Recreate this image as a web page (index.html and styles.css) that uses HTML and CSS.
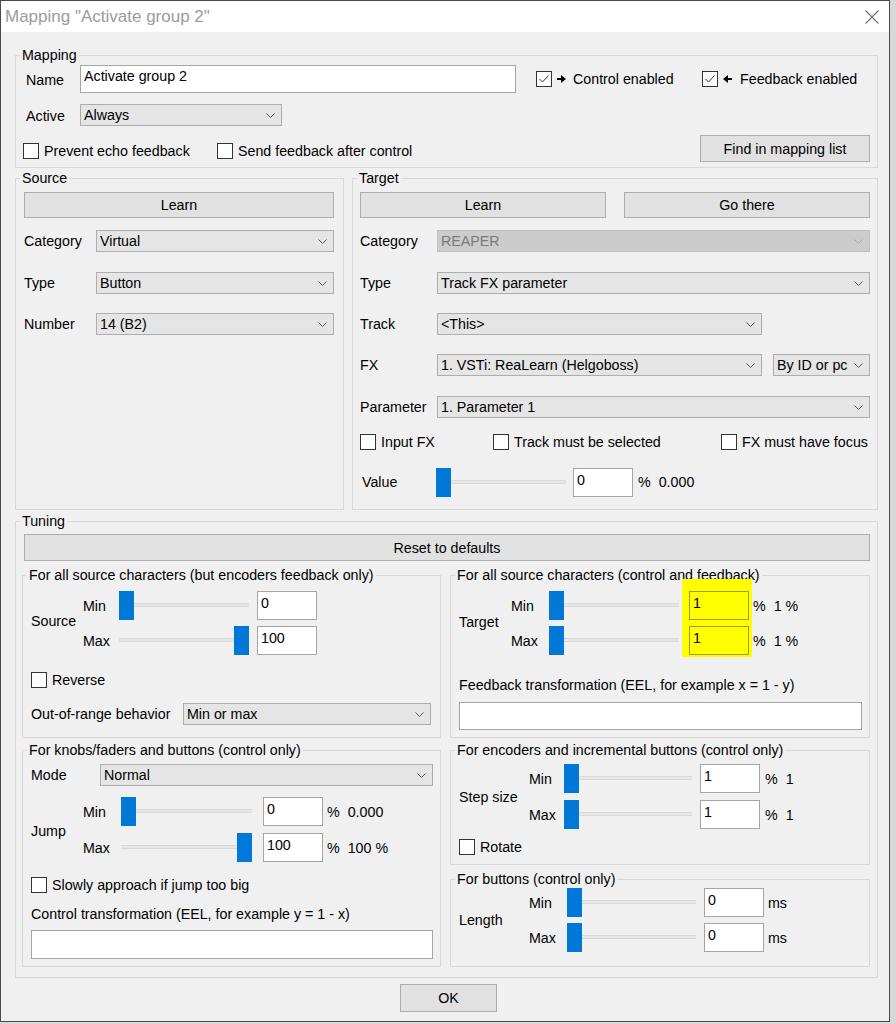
FILE: index.html
```html
<!DOCTYPE html>
<html>
<head>
<meta charset="utf-8">
<title>Mapping</title>
<link rel="stylesheet" href="styles.css">
</head>
<body>
<div class="window">
  <div class="titlebar">
    <span class="title">Mapping "Activate group 2"</span>
    <svg class="close" width="14" height="14" viewBox="0 0 14 14"><path d="M0.5 0.5 L13.5 13.5 M13.5 0.5 L0.5 13.5" stroke="#707070" stroke-width="1.1" fill="none"/></svg>
  </div>
  <div class="content">
    <fieldset class="group mapping">
      <legend>Mapping</legend>
      <div class="mapping-body">
        <div class="row r-name">
          <span class="lbl w-map">Name</span>
          <div class="input name-input">Activate group 2</div>
          <div class="chk ctrl-en">
            <span class="cb"><svg width="12" height="12" viewBox="0 0 12 12"><polyline points="1.5,6 4.5,9 10.5,2.5" fill="none" stroke="#333" stroke-width="1"/></svg></span>
            <svg class="arrow" width="9" height="8" viewBox="0 0 9 8"><rect x="0" y="3" width="5" height="2" fill="#000"/><polygon points="4,0 9,4 4,8" fill="#000"/></svg>
            <span class="arrow-text">Control enabled</span>
          </div>
          <div class="chk">
            <span class="cb"><svg width="12" height="12" viewBox="0 0 12 12"><polyline points="1.5,6 4.5,9 10.5,2.5" fill="none" stroke="#333" stroke-width="1"/></svg></span>
            <svg class="arrow" width="9" height="8" viewBox="0 0 9 8"><rect x="4" y="3" width="5" height="2" fill="#000"/><polygon points="5,0 0,4 5,8" fill="#000"/></svg>
            <span class="arrow-text fb">Feedback enabled</span>
          </div>
        </div>
        <div class="row r-active">
          <span class="lbl w-map">Active</span>
          <div class="select active-select"><span>Always</span><svg class="chev" width="9" height="5" viewBox="0 0 9 5"><polyline points="0.5,0.5 4.5,4.5 8.5,0.5" fill="none" stroke="#555" stroke-width="1"/></svg></div>
        </div>
        <div class="row r-opts">
          <div class="chk prevent opt"><span class="cb"></span><span>Prevent echo feedback</span></div>
          <div class="chk opt"><span class="cb"></span><span>Send feedback after control</span></div>
          <div class="btn find-btn">Find in mapping list</div>
        </div>
      </div>
    </fieldset>

    <div class="st-row">
      <fieldset class="group source">
        <legend>Source</legend>
        <div class="src-body">
          <div class="btn learn">Learn</div>
          <div class="frow m12"><span class="lbl src-lbl">Category</span><div class="select grow"><span>Virtual</span><svg class="chev" width="9" height="5" viewBox="0 0 9 5"><polyline points="0.5,0.5 4.5,4.5 8.5,0.5" fill="none" stroke="#555" stroke-width="1"/></svg></div></div>
          <div class="frow m20"><span class="lbl src-lbl">Type</span><div class="select grow"><span>Button</span><svg class="chev" width="9" height="5" viewBox="0 0 9 5"><polyline points="0.5,0.5 4.5,4.5 8.5,0.5" fill="none" stroke="#555" stroke-width="1"/></svg></div></div>
          <div class="frow m19"><span class="lbl src-lbl">Number</span><div class="select grow"><span>14 (B2)</span><svg class="chev" width="9" height="5" viewBox="0 0 9 5"><polyline points="0.5,0.5 4.5,4.5 8.5,0.5" fill="none" stroke="#555" stroke-width="1"/></svg></div></div>
        </div>
      </fieldset>
      <fieldset class="group target">
        <legend>Target</legend>
        <div class="tgt-body">
          <div class="tgt-btns"><div class="btn tbtn">Learn</div><div class="btn tbtn">Go there</div></div>
          <div class="frow m12"><span class="lbl tgt-lbl">Category</span><div class="select grow disabled"><span>REAPER</span><svg class="chev" width="9" height="5" viewBox="0 0 9 5"><polyline points="0.5,0.5 4.5,4.5 8.5,0.5" fill="none" stroke="#a8a8a8" stroke-width="1"/></svg></div></div>
          <div class="frow m20"><span class="lbl tgt-lbl">Type</span><div class="select grow"><span>Track FX parameter</span><svg class="chev" width="9" height="5" viewBox="0 0 9 5"><polyline points="0.5,0.5 4.5,4.5 8.5,0.5" fill="none" stroke="#555" stroke-width="1"/></svg></div></div>
          <div class="frow m19"><span class="lbl tgt-lbl">Track</span><div class="select sel-track"><span>&lt;This&gt;</span><svg class="chev" width="9" height="5" viewBox="0 0 9 5"><polyline points="0.5,0.5 4.5,4.5 8.5,0.5" fill="none" stroke="#555" stroke-width="1"/></svg></div></div>
          <div class="frow m19"><span class="lbl tgt-lbl">FX</span><div class="select sel-track"><span>1. VSTi: ReaLearn (Helgoboss)</span><svg class="chev" width="9" height="5" viewBox="0 0 9 5"><polyline points="0.5,0.5 4.5,4.5 8.5,0.5" fill="none" stroke="#555" stroke-width="1"/></svg></div><div class="select sel-by"><span>By ID or pc</span><svg class="chev" width="9" height="5" viewBox="0 0 9 5"><polyline points="0.5,0.5 4.5,4.5 8.5,0.5" fill="none" stroke="#555" stroke-width="1"/></svg></div></div>
          <div class="frow m20"><span class="lbl tgt-lbl">Parameter</span><div class="select grow"><span>1. Parameter 1</span><svg class="chev" width="9" height="5" viewBox="0 0 9 5"><polyline points="0.5,0.5 4.5,4.5 8.5,0.5" fill="none" stroke="#555" stroke-width="1"/></svg></div></div>
          <div class="row tgt-checks">
            <div class="chk w-inputfx"><span class="cb"></span><span>Input FX</span></div>
            <div class="chk w-tracksel"><span class="cb"></span><span>Track must be selected</span></div>
            <div class="chk"><span class="cb"></span><span>FX must have focus</span></div>
          </div>
          <div class="row value-row">
            <span class="lbl value-lbl">Value</span>
            <div class="slider value-slider"><span class="thumb"></span></div>
            <div class="input num value-input">0</div>
            <div class="units value-units"><span>%</span><span class="uval">0.000</span></div>
          </div>
        </div>
      </fieldset>
    </div>

    <fieldset class="group tuning">
      <legend>Tuning</legend>
      <div class="tun-body">
        <div class="btn reset">Reset to defaults</div>
        <div class="sub-row sub-row1">
          <fieldset class="group sub-left">
            <legend>For all source characters (but encoders feedback only)</legend>
            <div class="sub-body">
              <div class="sblock mt8">
                <span class="side up w52">Source</span>
                <div class="lcol g6 w36"><span>Min</span><span>Max</span></div>
                <div class="scol g6 w130"><div class="slider"><span class="thumb"></span></div><div class="slider max"><span class="thumb"></span></div></div>
                <div class="icol g6 ml8"><div class="input num">0</div><div class="input num">100</div></div>
              </div>
              <div class="row chkrow mt17"><div class="chk"><span class="cb"></span><span>Reverse</span></div></div>
              <div class="row oor-row">
                <span class="lbl oor-lbl">Out-of-range behavior</span>
                <div class="select oor-select"><span>Min or max</span><svg class="chev" width="9" height="5" viewBox="0 0 9 5"><polyline points="0.5,0.5 4.5,4.5 8.5,0.5" fill="none" stroke="#555" stroke-width="1"/></svg></div>
              </div>
            </div>
          </fieldset>
          <fieldset class="group sub-right">
            <legend>For all source characters (control and feedback)</legend>
            <div class="sub-body">
              <div class="sblock mt8">
                <span class="side up w52">Target</span>
                <div class="lcol g6 w38"><span>Min</span><span>Max</span></div>
                <div class="scol g6 w130"><div class="slider"><span class="thumb"></span></div><div class="slider"><span class="thumb"></span></div></div>
                <div class="icol g6 highlight"><div class="input num yellow">1</div><div class="input num yellow">1</div></div>
                <div class="ucol g6 ml1"><div class="units"><span>%</span><span class="uval">1 %</span></div><div class="units"><span>%</span><span class="uval">1 %</span></div></div>
              </div>
              <div class="lbl-line fb-lbl">Feedback transformation (EEL, for example x = 1 - y)</div>
              <div class="input fb-input"></div>
            </div>
          </fieldset>
        </div>
        <div class="sub-row sub-row2">
          <fieldset class="group sub-left">
            <legend>For knobs/faders and buttons (control only)</legend>
            <div class="sub-body">
              <div class="row mode-row">
                <span class="lbl mode-lbl">Mode</span>
                <div class="select mode-select"><span>Normal</span><svg class="chev" width="9" height="5" viewBox="0 0 9 5"><polyline points="0.5,0.5 4.5,4.5 8.5,0.5" fill="none" stroke="#555" stroke-width="1"/></svg></div>
              </div>
              <div class="sblock mt11">
                <span class="side down w52">Jump</span>
                <div class="lcol g7 w38"><span>Min</span><span>Max</span></div>
                <div class="scol g7 w131"><div class="slider"><span class="thumb"></span></div><div class="slider max"><span class="thumb"></span></div></div>
                <div class="icol g7 ml11"><div class="input num">0</div><div class="input num">100</div></div>
                <div class="ucol g7 ml4"><div class="units"><span>%</span><span class="uval">0.000</span></div><div class="units"><span>%</span><span class="uval">100 %</span></div></div>
              </div>
              <div class="row chkrow mt15"><div class="chk"><span class="cb"></span><span>Slowly approach if jump too big</span></div></div>
              <div class="lbl-line ctl-lbl">Control transformation (EEL, for example y = 1 - x)</div>
              <div class="input ctl-input"></div>
            </div>
          </fieldset>
          <div class="right-col">
            <fieldset class="group enc">
              <legend>For encoders and incremental buttons (control only)</legend>
              <div class="sub-body">
                <div class="sblock mt6">
                  <span class="side w70">Step size</span>
                  <div class="lcol g7 w35"><span>Min</span><span>Max</span></div>
                  <div class="scol g7 w128"><div class="slider"><span class="thumb"></span></div><div class="slider"><span class="thumb"></span></div></div>
                  <div class="icol g7 ml8"><div class="input num">1</div><div class="input num">1</div></div>
                  <div class="ucol g7 ml5"><div class="units"><span>%</span><span class="uval">1</span></div><div class="units"><span>%</span><span class="uval">1</span></div></div>
                </div>
                <div class="row chkrow mt10"><div class="chk"><span class="cb"></span><span>Rotate</span></div></div>
              </div>
            </fieldset>
            <fieldset class="group btns-grp">
              <legend>For buttons (control only)</legend>
              <div class="sub-body">
                <div class="sblock mt1">
                  <span class="side w70">Length</span>
                  <div class="lcol g6 w38"><span>Min</span><span>Max</span></div>
                  <div class="scol g6 w129"><div class="slider"><span class="thumb"></span></div><div class="slider"><span class="thumb"></span></div></div>
                  <div class="icol g6 ml8"><div class="input num">0</div><div class="input num">0</div></div>
                  <div class="ucol g6 ml4"><div class="units"><span>ms</span></div><div class="units"><span>ms</span></div></div>
                </div>
              </div>
            </fieldset>
          </div>
        </div>
      </div>
    </fieldset>

    <div class="ok-row"><div class="btn ok">OK</div></div>
  </div>
</div>
</body>
</html>
```

FILE: styles.css
```css
* { box-sizing: border-box; }
html { background: #d8d8d8; }
body {
  margin: 0;
  font-family: "Liberation Sans", Arial, sans-serif;
  font-size: 14.25px;
  line-height: 16px;
  color: #000;
  white-space: nowrap;
}
.window {
  width: 890px;
  height: 1022px;
  border: 1px solid #4a4a4a;
  background: #f0f0f0;
  display: flex;
  flex-direction: column;
}
.titlebar {
  height: 31px;
  flex: none;
  background: #fff;
  display: flex;
  align-items: center;
  justify-content: space-between;
  padding: 0 10px 0 4px;
}
.title { font-size: 17px; color: #9c9c9c; }
.content { padding: 0 11px 0 14px; }

.group {
  margin: 0;
  padding: 0;
  min-width: 0;
  border: 1px solid #d9d9d9;
}
legend {
  padding: 0 2px;
  margin-left: 4px;
  line-height: 16px;
  height: 16px;
}

.row { display: flex; align-items: center; }
.frow { display: flex; align-items: center; height: 22px; }
.lbl { flex: none; }
.m12 { margin-top: 12px; }
.m19 { margin-top: 19px; }
.m20 { margin-top: 20px; }
.mt1 { margin-top: 1px; }
.mt6 { margin-top: 6px; }
.mt8 { margin-top: 8px; }
.mt10 { margin-top: 10px; }
.mt11 { margin-top: 11px; }
.mt15 { margin-top: 15px; }
.mt17 { margin-top: 17px; }
.grow { flex: 1; }

/* controls */
.cb {
  width: 16px;
  height: 16px;
  flex: none;
  border: 1px solid #333;
  background: #fff;
  display: flex;
  align-items: center;
  justify-content: center;
}
.chk { display: flex; align-items: center; gap: 5px; flex: none; }
.btn {
  background: #e1e1e1;
  border: 1px solid #adadad;
  display: flex;
  align-items: center;
  justify-content: center;
  flex: none;
}
.select {
  height: 22px;
  background: #e5e5e5;
  border: 1px solid #adadad;
  display: flex;
  align-items: center;
  justify-content: space-between;
  padding: 0 6px 0 3px;
  overflow: hidden;
}
.select.disabled { background: #cccccc; border-color: #bfbfbf; color: #7a7a7a; }
.chev { flex: none; }
.input {
  background: #fff;
  border: 1px solid #a5a5a5;
  padding: 3px 3px 0 3px;
  flex: none;
}
.input.num { width: 60px; height: 29px; }
.input.yellow { background: #ffff00; border-color: #9b9b1e; }
.slider {
  height: 29px;
  display: flex;
  align-items: center;
  justify-content: flex-start;
  background: linear-gradient(to bottom,
    transparent 0, transparent 12px,
    #d9d9d9 12px, #d9d9d9 13px,
    #e7e7e7 13px, #e7e7e7 15px,
    #d9d9d9 15px, #d9d9d9 16px,
    transparent 16px);
  flex: none;
}
.slider.max { justify-content: flex-end; }
.thumb { width: 15px; height: 29px; background: #0078d7; flex: none; }
.units { display: flex; align-items: center; height: 29px; }
.uval { margin-left: 8px; }

/* mapping */
.mapping { margin-top: 15px; }
.mapping-body { padding: 2px 7px 5px 0; }
.r-name { height: 28px; }
.w-map { width: 54px; margin-left: 10px; padding-top: 2px; }
.name-input { width: 436px; height: 28px; padding-top: 2px; }
.ctrl-en { margin-left: 20px; width: 166px; }
.arrow { flex: none; }
.arrow-text { margin-left: 2px; }
.arrow-text.fb { margin-left: 3px; }
.r-active { height: 22px; margin-top: 11px; }
.active-select { width: 202px; }
.r-opts { height: 27px; margin-top: 9px; align-items: flex-start; }
.opt { margin-top: 8px; }
.prevent { margin-left: 7px; width: 194px; }
.find-btn { margin-left: auto; width: 170px; height: 27px; }

/* source / target */
.st-row { display: flex; gap: 8px; margin-top: 2px; height: 340px; flex: none; }
.source { width: 329px; flex: none; }
.target { flex: 1; }
.src-body { padding: 6px 9px 0 8px; }
.learn { height: 26px; }
.src-lbl { width: 72px; }
.tgt-body { padding: 6px 7px 0 7px; }
.tgt-btns { display: flex; justify-content: space-between; height: 26px; }
.tbtn { width: 246px; height: 26px; }
.tgt-lbl { width: 77px; }
.sel-track { width: 325px; flex: none; }
.sel-by { width: 97px; margin-left: 11px; flex: none; }
.tgt-checks { height: 16px; margin-top: 16px; }
.w-inputfx { width: 133px; }
.w-tracksel { width: 228px; }
.value-row { height: 30px; margin-top: 17px; }
.value-lbl { width: 74px; margin-left: 2px; }
.value-slider { width: 130px; }
.value-input { margin-left: 7px; }
.value-units { margin-left: 5px; }

/* tuning */
.tuning { margin-top: 3px; }
.tun-body { padding: 5px 7px 10px 6px; }
.reset { height: 27px; margin-left: 2px; }
.sub-row { display: flex; gap: 9px; }
.sub-row1 { margin-top: 6px; height: 171px; }
.sub-row2 { margin-top: 4px; height: 225px; }
.sub-left { width: 419px; flex: none; }
.sub-right { flex: 1; }
.right-col { flex: 1; display: flex; flex-direction: column; gap: 6px; }
.enc { height: 123px; flex: none; }
.btns-grp { height: 96px; flex: none; }
.sub-body { padding-left: 8px; }

.sblock { display: flex; }
.side { display: flex; align-items: center; flex: none; }
.side.up { padding-bottom: 5px; }
.side.down { padding-top: 3px; }
.lcol, .scol, .icol, .ucol { display: flex; flex-direction: column; flex: none; }
.lcol > span { height: 29px; display: flex; align-items: center; }
.g6 { gap: 6px; }
.g7 { gap: 7px; }
.w35 { width: 35px; }
.w36 { width: 36px; }
.w38 { width: 38px; }
.w52 { width: 52px; }
.w70 { width: 70px; }
.w128 .slider { width: 128px; }
.w129 .slider { width: 129px; }
.w130 .slider { width: 130px; }
.w131 .slider { width: 131px; }
.ml1 { margin-left: 1px; }
.ml4 { margin-left: 4px; }
.ml5 { margin-left: 5px; }
.ml8 { margin-left: 8px; }
.ml11 { margin-left: 11px; }
.highlight {
  background: #ffff00;
  margin-left: 3px;
  margin-top: -12px;
  padding: 12px 3px 2px 7px;
}
.chkrow { height: 16px; }
.oor-row { height: 22px; margin-top: 15px; }
.oor-lbl { width: 152px; }
.oor-select { width: 248px; flex: none; }
.lbl-line { height: 16px; }
.fb-lbl { margin-top: 20px; }
.fb-input { margin-top: 9px; width: 403px; height: 28px; }
.mode-row { height: 22px; margin-top: 6px; }
.mode-lbl { width: 69px; }
.mode-select { width: 333px; flex: none; }
.ctl-lbl { margin-top: 13px; }
.ctl-input { margin-top: 8px; width: 402px; height: 29px; }

.ok-row { margin-top: 6px; display: flex; }
.ok { width: 97px; height: 28px; margin-left: 385px; }
```
